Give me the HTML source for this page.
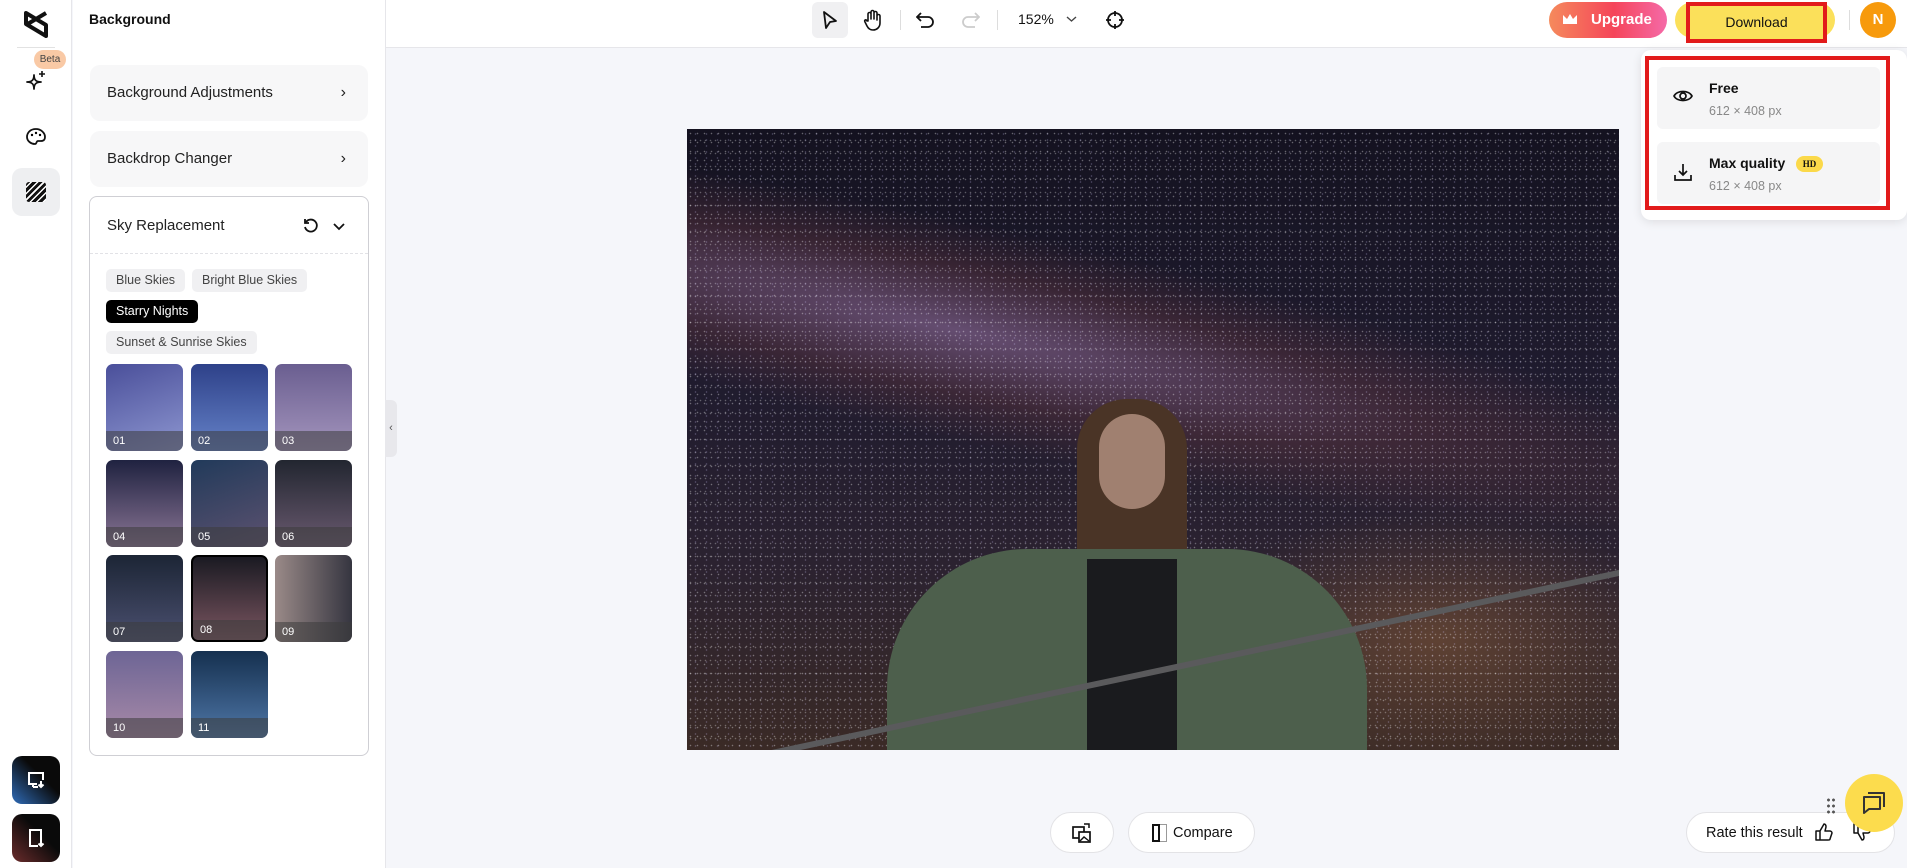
<!DOCTYPE html>
<html><head><meta charset="utf-8"><style>
*{box-sizing:border-box;margin:0;padding:0}
body{width:1907px;height:868px;overflow:hidden;font-family:"Liberation Sans",sans-serif;background:#f5f6fa;position:relative;color:#111}
.abs{position:absolute}
.rail{left:0;top:0;width:72px;height:868px;background:#fff;border-right:1px solid #e6e6ea}
.panel{left:73px;top:0;width:313px;height:868px;background:#fff;border-right:1px solid #e6e6ea}
.top{left:386px;top:0;width:1521px;height:48px;background:#fff;border-bottom:1px solid #e6e6ea}
.card{left:17px;width:278px;height:56px;background:#f7f7f8;border-radius:10px;font-size:15px;color:#222;padding-left:17px;line-height:56px}
.card .ch{position:absolute;right:22px;top:0;font-size:16px}
.chip{height:23px;border-radius:5px;background:#f0f0f2;font-size:12.5px;color:#444;line-height:23px;padding:0 10px}
.th{width:77px;height:87px;border-radius:7px;overflow:hidden}
.th span{position:absolute;left:0;right:0;bottom:0;height:20px;background:rgba(60,60,60,.55);color:#fff;font-size:11px;padding:4px 7px}
.btnw{background:#fff;border:1px solid #e3e3e6;border-radius:21px;height:41px}
</style></head><body>
<div class="abs rail">
 <svg class="abs" style="left:22px;top:9px" width="28" height="30" viewBox="0 0 28 30"><path d="M4 4 L24 16 L24 27 L4 15 Z M24 4 L4 16" fill="none" stroke="#111" stroke-width="4" stroke-linejoin="round"/></svg>
 <div class="abs" style="left:17px;top:47px;width:38px;height:1px;background:#e2e2e2"></div>
 <div class="abs" style="left:34px;top:50px;width:32px;height:19px;border-radius:10px;background:#f9c9a5;font-size:10px;line-height:19px;text-align:center;color:#444">Beta</div>
 <svg class="abs" style="left:25px;top:69px" width="22" height="22" viewBox="0 0 22 22"><path d="M9 6C9 11 7 13 2 13 7 13 9 15 9 20 9 15 11 13 16 13 11 13 9 11 9 6Z" fill="none" stroke="#111" stroke-width="1.8" stroke-linejoin="round"/><path d="M17 2v6M14 5h6" stroke="#111" stroke-width="1.6"/></svg>
 <svg class="abs" style="left:25px;top:127px" width="22" height="20" viewBox="0 0 22 20"><path d="M11 2C5 2 2 6 2 10c0 4 4 7 8 7 2 0 1-3 3-3h3c3 0 4-2 4-4 0-4-4-8-9-8z" fill="none" stroke="#111" stroke-width="1.8"/><circle cx="7" cy="8" r="1.2"/><circle cx="11" cy="6" r="1.2"/><circle cx="15" cy="8" r="1.2"/></svg>
 <div class="abs" style="left:12px;top:168px;width:48px;height:48px;border-radius:10px;background:#eeeff1"></div>
 <div class="abs" style="left:26px;top:182px;width:20px;height:20px;border-radius:3px;background:repeating-linear-gradient(135deg,#111 0 3px,#fff 3px 4.5px)"></div>
 <div class="abs" style="left:12px;top:756px;width:48px;height:48px;border-radius:10px;background:linear-gradient(45deg,#2f6cb8,#0a0a0a 60%)"></div>
 <svg class="abs" style="left:26px;top:770px" width="20" height="20" viewBox="0 0 20 20"><path d="M11 14H3V3h14v7M7 17h5M7 14v3" fill="none" stroke="#fff" stroke-width="2"/><path d="M15 11v6m-2.5-2.5L15 17l2.5-2.5" stroke="#fff" stroke-width="2" fill="none"/></svg>
 <div class="abs" style="left:12px;top:814px;width:48px;height:48px;border-radius:10px;background:linear-gradient(45deg,#6b2c2c,#0a0a0a 60%)"></div>
 <svg class="abs" style="left:26px;top:828px" width="20" height="20" viewBox="0 0 20 20"><path d="M12 18H4V2h11v10" fill="none" stroke="#fff" stroke-width="2"/><path d="M15 12v6m-2.5-2.5L15 18l2.5-2.5" stroke="#fff" stroke-width="2" fill="none"/></svg>
</div>
<div class="abs panel">
 <div class="abs" style="left:16px;top:11px;font-size:14px;font-weight:bold">Background</div>
 <div class="abs card" style="top:65px">Background Adjustments<span class="ch">›</span></div>
 <div class="abs card" style="top:131px">Backdrop Changer<span class="ch">›</span></div>
 <div class="abs" style="left:16px;top:196px;width:280px;height:560px;border:1px solid #cfcfd4;border-radius:8px">
  <div class="abs" style="left:17px;top:20px;font-size:15px;color:#222">Sky Replacement</div>
  <svg class="abs" style="left:212px;top:20px" width="18" height="18" viewBox="0 0 18 18"><path d="M4 5A6 6 0 1 1 3 10" fill="none" stroke="#111" stroke-width="1.8"/><path d="M3 2v4h4" fill="none" stroke="#111" stroke-width="1.8"/></svg>
  <svg class="abs" style="left:243px;top:24px" width="12" height="10" viewBox="0 0 12 10"><path d="M1 3l5 5 5-5" fill="none" stroke="#111" stroke-width="1.8"/></svg>
  <div class="abs" style="left:0;right:0;top:56px;border-top:1px dashed #e2e2e6"></div>
 </div>
 <div class="abs chip" style="left:33px;top:269px">Blue Skies</div>
 <div class="abs chip" style="left:119px;top:269px">Bright Blue Skies</div>
 <div class="abs chip" style="left:33px;top:300px;background:#000;color:#fff">Starry Nights</div>
 <div class="abs chip" style="left:33px;top:331px">Sunset &amp; Sunrise Skies</div>
 <div class="abs th" style="left:33px;top:364px;background:linear-gradient(160deg,#4a4f9a,#8d96d0)"><span>01</span></div>
 <div class="abs th" style="left:118px;top:364px;background:linear-gradient(180deg,#2e4189,#6582c8)"><span>02</span></div>
 <div class="abs th" style="left:202px;top:364px;background:linear-gradient(180deg,#6a5e90,#a495bd)"><span>03</span></div>
 <div class="abs th" style="left:33px;top:460px;background:linear-gradient(180deg,#1f2240,#8a7595)"><span>04</span></div>
 <div class="abs th" style="left:118px;top:460px;background:linear-gradient(160deg,#213a5a,#5d5270)"><span>05</span></div>
 <div class="abs th" style="left:202px;top:460px;background:linear-gradient(180deg,#222630,#6a5a70)"><span>06</span></div>
 <div class="abs th" style="left:33px;top:555px;background:linear-gradient(180deg,#1c2535,#4b5070)"><span>07</span></div>
 <div class="abs th" style="left:118px;top:555px;background:linear-gradient(180deg,#1a1a22,#7a5560);border:2px solid #000"><span>08</span></div>
 <div class="abs th" style="left:202px;top:555px;background:linear-gradient(90deg,#9a8a88,#353540)"><span>09</span></div>
 <div class="abs th" style="left:33px;top:651px;background:linear-gradient(180deg,#6d6595,#a88aa8)"><span>10</span></div>
 <div class="abs th" style="left:118px;top:651px;background:linear-gradient(180deg,#15304f,#4f77a8)"><span>11</span></div>
</div>
<div class="abs" style="left:385px;top:400px;width:12px;height:57px;background:#e8e8ec;border-radius:0 6px 6px 0;font-size:11px;color:#555;line-height:57px;text-align:center">‹</div>
<div class="abs top">
 <div class="abs" style="left:426px;top:2px;width:36px;height:36px;border-radius:6px;background:#f0f0f2"></div>
 <svg class="abs" style="left:435px;top:10px" width="18" height="20" viewBox="0 0 18 20"><path d="M3 2L15 11 9 12 5 18Z" fill="none" stroke="#111" stroke-width="1.8" stroke-linejoin="round"/></svg>
 <svg class="abs" style="left:477px;top:9px" width="20" height="22" viewBox="0 0 20 22"><path d="M5 12V5a1.5 1.5 0 0 1 3 0v5V3a1.5 1.5 0 0 1 3 0v7V4a1.5 1.5 0 0 1 3 0v7-4a1.5 1.5 0 0 1 3 0v7c0 4-3 7-7 7-3 0-5-2-6-4l-2-4c-1-2 1-3 2-1z" fill="none" stroke="#111" stroke-width="1.6" stroke-linejoin="round"/></svg>
 <div class="abs" style="left:514px;top:10px;width:1px;height:20px;background:#ddd"></div>
 <svg class="abs" style="left:530px;top:11px" width="20" height="18" viewBox="0 0 20 18"><path d="M5 2L1 6l4 4M1 6h11a5 5 0 0 1 0 10H5" fill="none" stroke="#111" stroke-width="1.8"/></svg>
 <svg class="abs" style="left:574px;top:11px" width="20" height="18" viewBox="0 0 20 18"><path d="M15 2l4 4-4 4M19 6H8a5 5 0 0 0 0 10h7" fill="none" stroke="#ccc" stroke-width="1.8"/></svg>
 <div class="abs" style="left:611px;top:10px;width:1px;height:20px;background:#ddd"></div>
 <div class="abs" style="left:632px;top:11px;font-size:14px">152%</div>
 <svg class="abs" style="left:680px;top:15px" width="11" height="8" viewBox="0 0 11 8"><path d="M1 2l4.5 4L10 2" fill="none" stroke="#444" stroke-width="1.4"/></svg>
 <svg class="abs" style="left:719px;top:10px" width="20" height="20" viewBox="0 0 20 20"><circle cx="10" cy="10" r="7" fill="none" stroke="#111" stroke-width="1.8"/><path d="M10 1v5M10 14v5M1 10h5M14 10h5" stroke="#111" stroke-width="1.8"/></svg>
 <div class="abs" style="left:1163px;top:2px;width:118px;height:36px;border-radius:18px;background:linear-gradient(90deg,#f58a5c,#f5455a 55%,#f56aa8);color:#fff;font-weight:bold;font-size:15px;line-height:36px;padding-left:42px">Upgrade</div>
 <svg class="abs" style="left:1176px;top:13px" width="16" height="12" viewBox="0 0 16 12"><path d="M1 2l4 4 3-5 3 5 4-4v9H1z" fill="#fff"/></svg>
 <div class="abs" style="left:1289px;top:2px;width:160px;height:36px;border-radius:18px;background:#fbe05a"></div>
 <div class="abs" style="left:1300px;top:2px;width:141px;height:41px;border:4px solid #e21b1b;background:#fbe05a;font-size:14px;line-height:33px;text-align:center">Download</div>
 <div class="abs" style="left:1463px;top:10px;width:1px;height:20px;background:#ddd"></div>
 <div class="abs" style="left:1474px;top:2px;width:36px;height:36px;border-radius:50%;background:#f79a0c;color:#fff;font-weight:bold;font-size:15px;line-height:36px;text-align:center">N</div>
</div>
<div class="abs" style="left:687px;top:129px;width:932px;height:621px;overflow:hidden;background:linear-gradient(180deg,#141220 0%,#1f1b2e 40%,#2b2230 70%,#3a2a26 100%)">
 <div class="abs" style="left:-100px;top:140px;width:1200px;height:220px;transform:rotate(12deg);background:radial-gradient(ellipse at 30% 50%,rgba(160,120,170,.55),rgba(110,60,70,.35) 40%,transparent 70%)"></div>
 <div class="abs" style="left:500px;top:380px;width:500px;height:260px;background:radial-gradient(ellipse,rgba(150,100,60,.45),transparent 70%)"></div>
 <div class="abs" style="left:0;top:0;width:932px;height:621px;background-image:radial-gradient(circle,rgba(255,255,255,.35) 0.5px,transparent 1px),radial-gradient(circle,rgba(210,200,255,.3) 0.5px,transparent 1px),radial-gradient(circle,rgba(255,255,255,.3) 0.5px,transparent 1px);background-size:7px 9px,11px 6px,5px 13px;background-position:0 0,3px 2px,1px 5px"></div>
 <div class="abs" style="left:390px;top:270px;width:110px;height:190px;border-radius:50px 50px 20px 20px;background:#4a3426"></div>
 <div class="abs" style="left:412px;top:285px;width:66px;height:95px;border-radius:33px;background:#a08070"></div>
 <div class="abs" style="left:200px;top:420px;width:480px;height:260px;border-radius:140px 140px 0 0;background:#4d5f4c"></div>
 <div class="abs" style="left:400px;top:430px;width:90px;height:200px;background:#1a1b1e"></div>
 <div class="abs" style="left:-20px;top:540px;width:972px;height:6px;transform:rotate(-12deg);background:#5a5a5c"></div>
</div>
<div class="abs" style="left:1641px;top:50px;width:266px;height:170px;background:#fff;border-radius:10px;box-shadow:0 2px 10px rgba(0,0,0,.1)"></div>
<div class="abs" style="left:1657px;top:67px;width:223px;height:62px;background:#f5f5f6;border-radius:6px"></div>
<div class="abs" style="left:1657px;top:142px;width:223px;height:62px;background:#f5f5f6;border-radius:6px"></div>
<div class="abs" style="left:1645px;top:56px;width:245px;height:154px;border:4px solid #e21b1b"></div>
<svg class="abs" style="left:1673px;top:88px" width="20" height="16" viewBox="0 0 20 16"><path d="M1 8C4 2 16 2 19 8 16 14 4 14 1 8Z" fill="none" stroke="#111" stroke-width="1.7"/><circle cx="10" cy="8" r="3" fill="none" stroke="#111" stroke-width="1.7"/></svg>
<div class="abs" style="left:1709px;top:80px;font-size:14px;font-weight:bold">Free</div>
<div class="abs" style="left:1709px;top:104px;font-size:12.5px;color:#888">612 × 408 px</div>
<svg class="abs" style="left:1673px;top:162px" width="20" height="20" viewBox="0 0 20 20"><path d="M10 2v11M6 9l4 4 4-4M2 13v5h16v-5" fill="none" stroke="#111" stroke-width="1.7"/></svg>
<div class="abs" style="left:1709px;top:155px;font-size:14px;font-weight:bold">Max quality</div>
<div class="abs" style="left:1796px;top:156px;width:27px;height:16px;border-radius:8px;background:#fbd94a;font-size:9px;font-weight:bold;line-height:16px;text-align:center;font-family:'Liberation Serif',serif">HD</div>
<div class="abs" style="left:1709px;top:179px;font-size:12.5px;color:#888">612 × 408 px</div>
<div class="abs btnw" style="left:1050px;top:812px;width:64px"></div>
<svg class="abs" style="left:1071px;top:822px" width="22" height="22" viewBox="0 0 22 22"><rect x="2" y="5" width="11" height="11" fill="none" stroke="#111" stroke-width="1.7"/><rect x="8" y="10" width="11" height="10" fill="#fff" stroke="#111" stroke-width="1.7"/><path d="M9 19l4-4 5 4" fill="none" stroke="#111" stroke-width="1.4"/><path d="M13 2h5v4" fill="none" stroke="#111" stroke-width="1.5"/></svg>
<div class="abs btnw" style="left:1128px;top:812px;width:127px"></div>
<div class="abs" style="left:1152px;top:824px;width:8px;height:18px;border:2px solid #111"></div>
<div class="abs" style="left:1160px;top:824px;width:7px;height:18px;border:1px solid #999;border-left:none"></div>
<div class="abs" style="left:1173px;top:825px;font-size:14.5px">Compare</div>
<div class="abs btnw" style="left:1686px;top:812px;width:209px"></div>
<div class="abs" style="left:1706px;top:825px;font-size:14.5px">Rate this result</div>
<svg class="abs" style="left:1814px;top:822px" width="20" height="20" viewBox="0 0 20 20"><path d="M2 9h4v9H2zM6 9l4-7c2 0 2 2 2 3l-1 4h5c1 0 2 1 2 2l-2 6c0 1-1 1-2 1H6" fill="none" stroke="#111" stroke-width="1.5" stroke-linejoin="round"/></svg>
<svg class="abs" style="left:1852px;top:822px" width="20" height="20" viewBox="0 0 20 20"><path d="M2 2h4v9H2zM6 11l4 7c2 0 2-2 2-3l-1-4h5c1 0 2-1 2-2l-2-6c0-1-1-1-2-1H6" fill="none" stroke="#111" stroke-width="1.5" stroke-linejoin="round"/></svg>
<div class="abs" style="left:1826px;top:797px;width:10px;height:18px;background:radial-gradient(circle,#555 1.3px,transparent 1.6px);background-size:5px 6px"></div>
<div class="abs" style="left:1845px;top:774px;width:58px;height:58px;border-radius:50%;background:#fcdc4d"></div>
<svg class="abs" style="left:1860px;top:789px" width="28" height="28" viewBox="0 0 28 28"><path d="M8 4h16v14M4 8h16v12H9l-5 4Z" fill="none" stroke="#333" stroke-width="2" stroke-linejoin="round"/></svg>
</body></html>
